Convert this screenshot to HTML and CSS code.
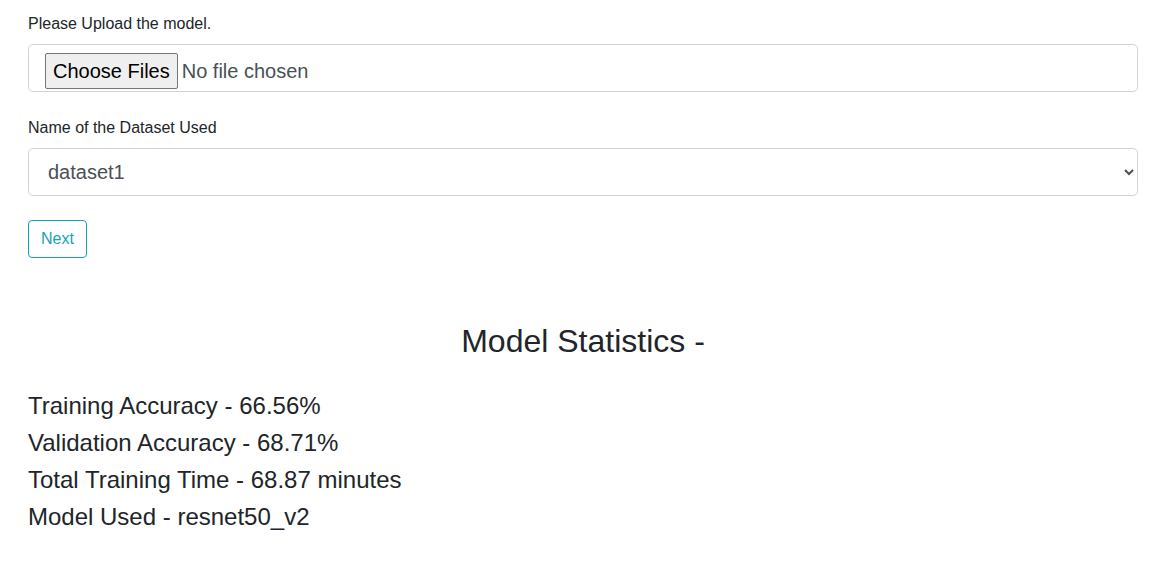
FILE: index.html
```html
<!DOCTYPE html>
<html lang="en">
<head>
<meta charset="utf-8">
<title>Model Upload</title>
<link rel="stylesheet" href="styles.css">
</head>
<body>
<div class="container">
  <form class="upload-form">
    <div class="form-group">
      <label class="form-label" for="model">Please Upload the model.</label>
      <input class="form-control file-input" type="file" id="model" multiple>
    </div>
    <div class="form-group">
      <label class="form-label" for="dataset">Name of the Dataset Used</label>
      <select class="form-control select-input" id="dataset">
        <option>dataset1</option>
        <option>dataset2</option>
      </select>
    </div>
    <button type="button" class="btn-outline">Next</button>
  </form>
  <section class="stats">
    <h2 class="stats-title">Model Statistics -</h2>
    <h4 class="stat-line">Training Accuracy - 66.56%</h4>
    <h4 class="stat-line">Validation Accuracy - 68.71%</h4>
    <h4 class="stat-line">Total Training Time - 68.87 minutes</h4>
    <h4 class="stat-line">Model Used - resnet50_v2</h4>
  </section>
</div>
</body>
</html>
```

FILE: styles.css
```css
* { box-sizing: border-box; }
html, body {
  margin: 0;
  padding: 0;
  background: #fff;
  font-family: "Liberation Sans", Arial, sans-serif;
  color: #212529;
  font-size: 16px;
  line-height: 1.5;
}
.container {
  padding: 12px 29px 0 28px;
}
.form-group {
  margin-bottom: 24px;
}
.form-label {
  display: block;
  margin-bottom: 8px;
  font-size: 16px;
  line-height: 24px;
  color: #212529;
}
.form-control {
  display: block;
  width: 100%;
  height: 48px;
  padding: 8px 16px;
  font-family: "Liberation Sans", Arial, sans-serif;
  font-size: 20px;
  line-height: 30px;
  color: #495057;
  background: #fff;
  border: 1px solid #ced4da;
  border-radius: 4.8px;
}
.file-input {
  overflow: visible;
}
.file-input::file-selector-button {
  font-family: "Liberation Sans", Arial, sans-serif;
  font-size: 20px;
  height: 36px;
  padding: 0 7px;
  margin-right: 4px;
  color: #000;
  background: #efefef;
  border: 1px solid #767676;
  border-radius: 2px;
}
.select-input {
  padding: 0 15px;
}
.btn-outline {
  display: inline-block;
  font-family: "Liberation Sans", Arial, sans-serif;
  font-size: 16px;
  line-height: 24px;
  padding: 6px 12px;
  color: #17a2b8;
  background: transparent;
  border: 1px solid #17a2b8;
  border-radius: 4px;
}
.stats {
  padding-top: 64px;
}
.stats-title {
  margin: 0 0 32px;
  font-size: 32px;
  line-height: 38.4px;
  font-weight: 400;
  text-align: center;
}
.stat-line {
  margin: 0 0 8px;
  font-size: 24px;
  line-height: 28.8px;
  font-weight: 400;
}
```
